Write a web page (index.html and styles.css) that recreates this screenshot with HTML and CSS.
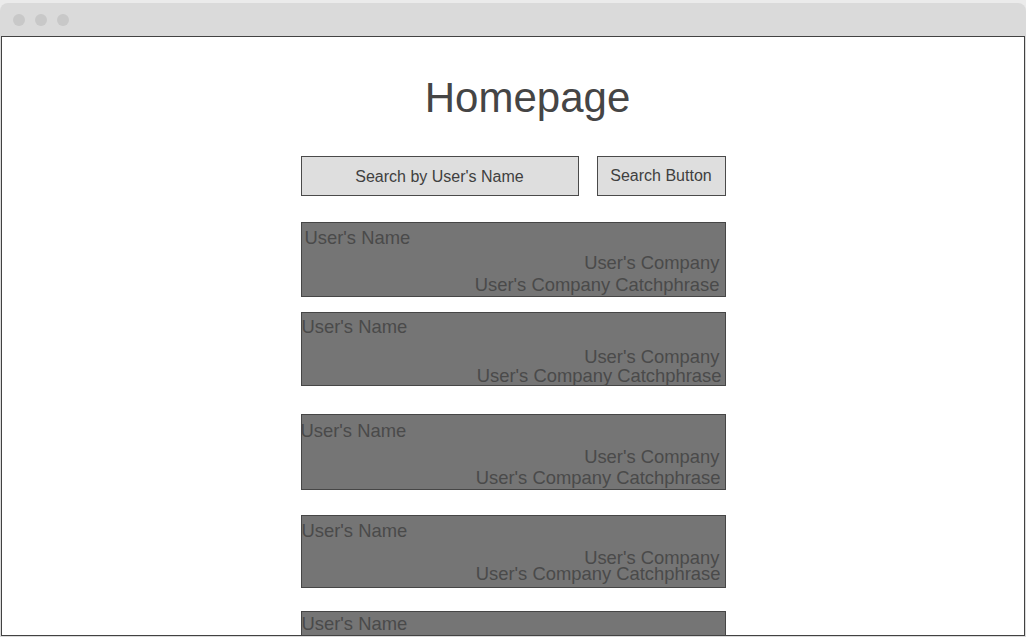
FILE: index.html
```html
<!DOCTYPE html>
<html lang="en">

<head>
    <meta charset="UTF-8">
    <title>Homepage</title>
    <meta name="viewport" content="width=device-width, initial-scale=1.0">
    <link rel="stylesheet" href="styles.css">
</head>

<body>
    <div class="window">
        <div class="titlebar">
            <span class="dot"></span>
            <span class="dot"></span>
            <span class="dot"></span>
        </div>
        <div class="viewport">
            <h1 class="title">Homepage</h1>

            <div class="search-row">
                <div class="search-input">Search by User's Name</div>
                <div class="search-button">Search Button</div>
            </div>

            <!-- User list -->
            <div class="user-list">
                <div class="card">
                    <div class="name">User's Name</div>
                    <div class="company">User's Company</div>
                    <div class="phrase">User's Company Catchphrase</div>
                </div>
                <div class="card">
                    <div class="name">User's Name</div>
                    <div class="company">User's Company</div>
                    <div class="phrase">User's Company Catchphrase</div>
                </div>
                <div class="card">
                    <div class="name">User's Name</div>
                    <div class="company">User's Company</div>
                    <div class="phrase">User's Company Catchphrase</div>
                </div>
                <div class="card">
                    <div class="name">User's Name</div>
                    <div class="company">User's Company</div>
                    <div class="phrase">User's Company Catchphrase</div>
                </div>
                <div class="card">
                    <div class="name">User's Name</div>
                </div>
            </div>
        </div>
    </div>
</body>

</html>
```
FILE: styles.css
```css
body {
    background: #ebebeb;
    margin: 0;
    padding: 0;
    font-family: 'Liberation Sans', Arial, sans-serif;
    overflow: hidden;
}

.window {
    margin-top: 3px;
    background: #dadada;
    border-radius: 8px 8px 0 0;
    height: 634px;
}

.titlebar {
    height: 33px;
    display: flex;
    align-items: center;
    gap: 10px;
    padding-left: 13px;
}

.dot {
    width: 12px;
    height: 12px;
    border-radius: 50%;
    background: #c8c8c8;
}

.viewport {
    margin: 0 1px;
    height: 600px;
    box-sizing: border-box;
    background: #fff;
    border: 1px solid #424242;
    overflow: hidden;
    display: flex;
    flex-direction: column;
    align-items: center;
}

.title {
    margin: 37px 0 0 29px;
    font-size: 42px;
    line-height: 48px;
    font-weight: normal;
    color: #454545;
}

/* Search bar */
.search-row {
    margin-top: 34px;
    display: flex;
    gap: 18px;
    width: 425px;
}

.search-input, .search-button {
    height: 40px;
    box-sizing: border-box;
    background: #dedede;
    border: 1px solid #4a4a4a;
    color: #404040;
    font-size: 16px;
    display: flex;
    align-items: center;
    justify-content: center;
}

.search-input {
    width: 278px;
    padding-top: 2px;
}

.search-button {
    width: 129px;
}

/* Cards */
.user-list {
    margin-top: 26px;
    width: 425px;
    display: flex;
    flex-direction: column;
}

.card {
    box-sizing: border-box;
    height: 75px;
    flex-shrink: 0;
    background: #757575;
    border: 1px solid #464646;
    color: #4a4a4a;
    font-size: 18.4px;
    line-height: 21px;
    padding: 4px 5px 0 3px;
}

.company, .phrase {
    text-align: right;
}

.company { margin-top: 4px; }
.phrase { margin-top: 1px; }

.card:nth-child(2) {
    margin-top: 15px;
    height: 74px;
    padding: 3px 3px 0 0;
}
.card:nth-child(2) .company { margin-top: 9px; margin-right: 2px; }
.card:nth-child(2) .phrase { margin-top: -2px; }

.card:nth-child(3) {
    margin-top: 28px;
    height: 76px;
    padding: 5px 4px 0 0;
}
.card:nth-child(3) .name { margin-left: -1px; }
.card:nth-child(3) .company { margin-top: 5px; margin-right: 1px; }
.card:nth-child(3) .phrase { margin-top: 0; }

.card:nth-child(4) {
    margin-top: 25px;
    height: 73px;
    padding: 4px 4px 0 0;
}
.card:nth-child(4) .company { margin-top: 6px; margin-right: 1px; }
.card:nth-child(4) .phrase { margin-top: -5px; }

.card:nth-child(5) {
    margin-top: 23px;
    padding: 1px 5px 0 0;
}
```
